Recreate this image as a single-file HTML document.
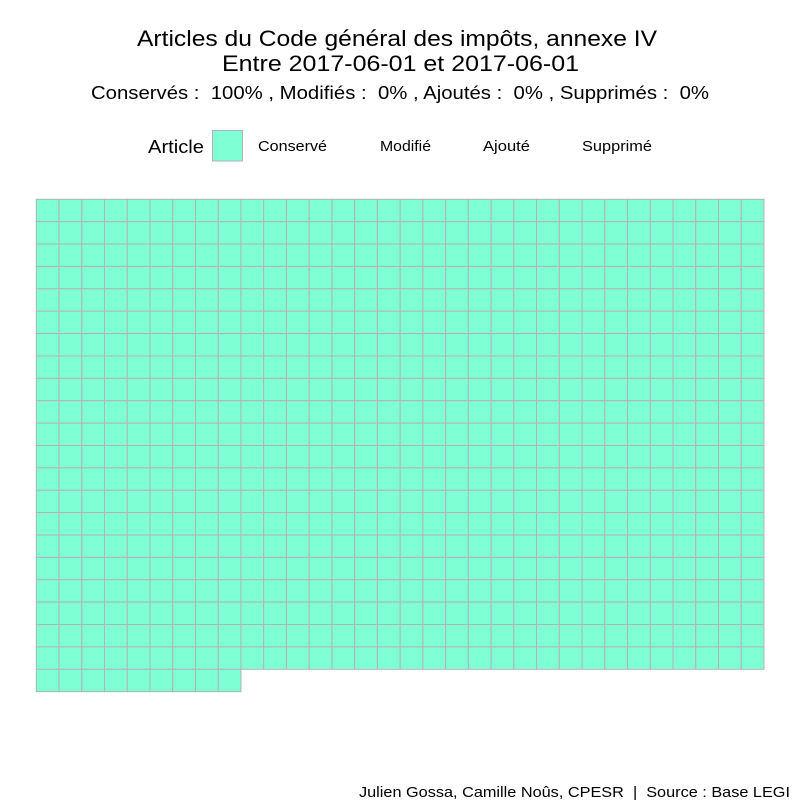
<!DOCTYPE html>
<html><head><meta charset="utf-8"><style>
html,body{margin:0;padding:0;background:#fff;}
svg{display:block;font-family:"Liberation Sans",sans-serif;}
</style></head><body>
<svg width="800" height="800" viewBox="0 0 800 800" xmlns="http://www.w3.org/2000/svg">
<rect width="800" height="800" fill="#fff"/>
<text x="137" y="46" font-size="22.5" textLength="520" lengthAdjust="spacingAndGlyphs" fill="#000">Articles du Code général des impôts, annexe IV</text>
<text x="222" y="71" font-size="22.5" textLength="357" lengthAdjust="spacingAndGlyphs" fill="#000">Entre 2017-06-01 et 2017-06-01</text>
<text x="91" y="99" font-size="18.5" textLength="618" lengthAdjust="spacingAndGlyphs" fill="#000" xml:space="preserve">Conservés :  100% , Modifiés :  0% , Ajoutés :  0% , Supprimés :  0%</text>
<text x="148" y="153" font-size="18.5" textLength="56" lengthAdjust="spacingAndGlyphs" fill="#000">Article</text>
<rect x="212.5" y="130.5" width="30" height="30.5" fill="#7fffd4" stroke="#b3b3b3" stroke-width="1"/>
<text x="258" y="151" font-size="14.5" textLength="69" lengthAdjust="spacingAndGlyphs" fill="#000">Conservé</text>
<text x="380" y="151" font-size="14.5" textLength="51" lengthAdjust="spacingAndGlyphs" fill="#000">Modifié</text>
<text x="483" y="151" font-size="14.5" textLength="47" lengthAdjust="spacingAndGlyphs" fill="#000">Ajouté</text>
<text x="582" y="151" font-size="14.5" textLength="70" lengthAdjust="spacingAndGlyphs" fill="#000">Supprimé</text>
<g id="grid"></g>
<text x="359" y="797" font-size="14.5" textLength="431" lengthAdjust="spacingAndGlyphs" fill="#000" xml:space="preserve">Julien Gossa, Camille Noûs, CPESR  |  Source : Base LEGI</text>
</svg>
<script>
(function(){
var g=document.getElementById('grid'),ns='http://www.w3.org/2000/svg';
var x0=36.3,y0=199.3,w=(764-36.3)/32,h=(669.3-199.3)/21;
function cell(c,r){var e=document.createElementNS(ns,'rect');
e.setAttribute('x',x0+c*w);e.setAttribute('y',y0+r*h);e.setAttribute('width',w);e.setAttribute('height',h);
e.setAttribute('fill','#7fffd4');e.setAttribute('stroke','#b3b3b3');e.setAttribute('stroke-width','1');g.appendChild(e);}
for(var r=0;r<21;r++)for(var c=0;c<32;c++)cell(c,r);
for(var c=0;c<9;c++)cell(c,21);
})();
</script>
</body></html>
